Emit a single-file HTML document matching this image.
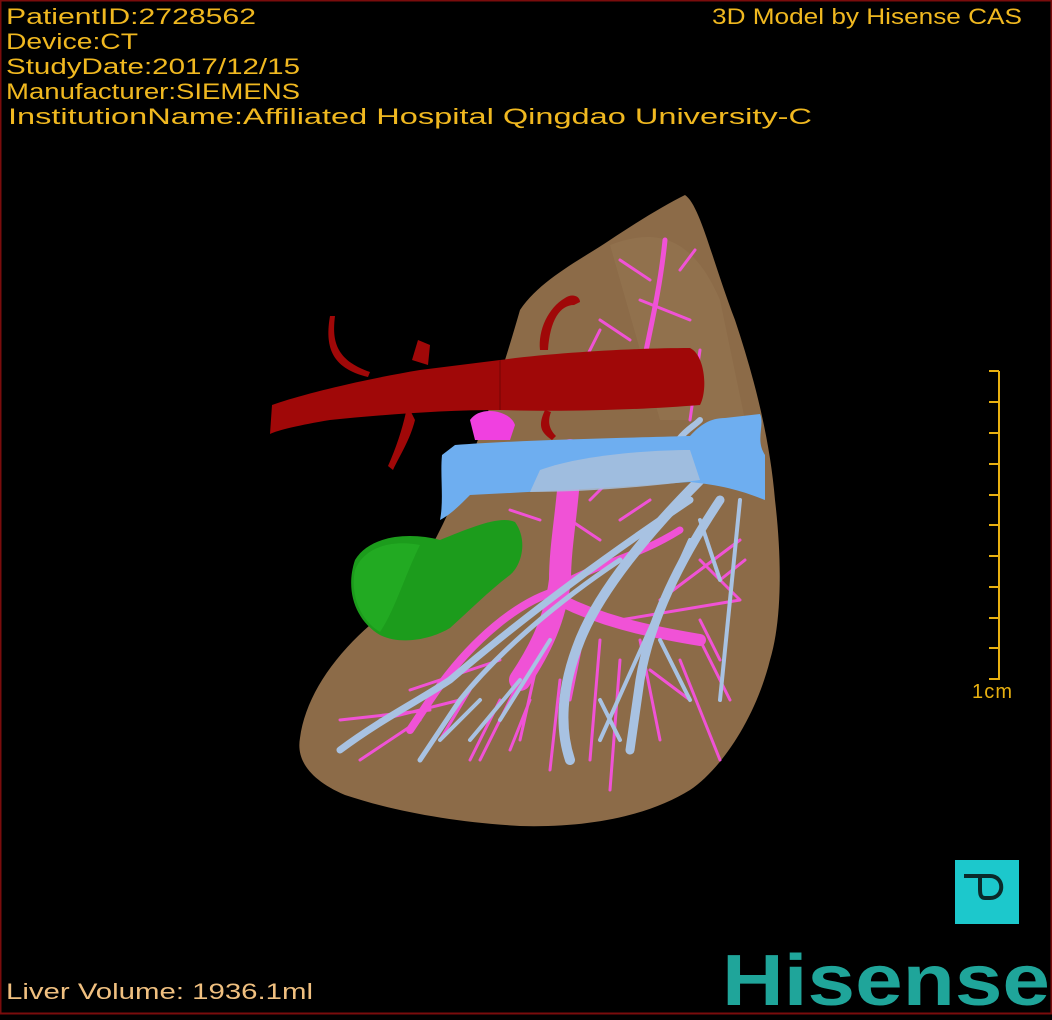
<!DOCTYPE html>
<html><head><meta charset="utf-8"><style>
html,body{margin:0;padding:0;background:#000;}
svg{display:block}
</style></head><body>
<svg width="1052" height="1020" viewBox="0 0 1052 1020" xmlns="http://www.w3.org/2000/svg">
<rect x="0" y="0" width="1052" height="1020" fill="#000"/>
<rect x="0.5" y="0.5" width="1051" height="1013" fill="none" stroke="#7a0c0c" stroke-width="2"/>

<!-- liver -->
<path d="M685,195 C700,205 712,260 735,320 C755,380 770,440 775,500 C782,560 782,620 770,660 C755,720 720,770 690,790 C650,815 590,828 520,826 C450,822 390,810 345,795 C310,780 296,760 300,738 C305,700 330,660 370,625 C400,600 420,570 440,530 C470,470 500,380 520,310 C540,280 580,260 610,240 C640,220 665,205 685,195 Z" fill="#8c6b48"/>
<path d="M610,245 C650,230 690,230 720,300 L745,420 L660,420 Z" fill="#957552" opacity="0.6"/>

<!-- magenta vessels -->
<g stroke="#f052d6" fill="none" stroke-linecap="round">
<path d="M570,450 C570,500 560,540 560,580 C555,620 540,650 520,680" stroke-width="22"/>
<path d="M560,600 C600,620 640,630 700,640" stroke-width="12"/>
<path d="M560,590 C520,600 470,640 430,700 L410,730" stroke-width="8"/>
<path d="M570,580 C610,560 640,555 680,530" stroke-width="7"/>
<path d="M665,240 C660,290 650,330 640,380" stroke-width="5"/>
<path d="M640,300 L690,320 M630,340 L600,320 M650,280 L620,260 M700,350 L690,420 M600,330 L585,360 M680,270 L695,250" stroke-width="3"/>
<path d="M520,680 L480,760 M540,650 L520,740 M600,640 L590,760 M640,640 L660,740 M700,640 L730,700 M460,700 L380,720 M430,710 L340,720 M620,620 L740,600 M660,600 L740,540 M500,700 L470,760 M560,680 L550,770 M620,660 L610,790 M680,660 L720,760 M500,660 L410,690 M420,720 L360,760 M470,690 L440,740 M530,700 L510,750 M580,650 L570,700 M650,670 L690,700 M700,620 L720,660 M720,580 L745,560 M700,560 L740,600 M600,540 L570,520 M620,520 L650,500 M590,500 L620,470 M540,520 L510,510" stroke-width="3"/>
<path d="M470,420 C480,405 510,410 515,425 L510,440 L475,440 Z" fill="#f040e0" stroke="none"/>
</g>

<!-- light blue vessels -->
<g stroke="#a8c2e2" fill="none" stroke-linecap="round">
<path d="M700,480 C650,530 600,590 580,640 C560,690 560,730 570,760" stroke-width="10"/>
<path d="M720,500 C680,560 650,620 640,680 L630,750" stroke-width="9"/>
<path d="M660,470 C680,430 690,430 700,420" stroke-width="6"/>
<path d="M690,500 C600,560 520,620 450,680 C420,700 380,720 340,750" stroke-width="7"/>
<path d="M620,560 C560,600 500,650 460,700 L420,760" stroke-width="5"/>
<path d="M700,520 L720,580 M740,500 L720,700 M690,540 L600,740 M520,680 L470,740 M550,640 L500,720 M480,700 L440,740 M600,700 L620,740 M660,640 L690,700" stroke-width="4"/>
</g>

<!-- red artery -->
<g fill="#a00808">
<path d="M272,405 C300,395 360,380 420,370 L500,360 C560,352 640,348 690,348 C705,355 708,390 700,405 C640,410 560,412 500,410 C440,410 380,415 330,420 C300,425 278,430 270,434 Z"/>
<path d="M412,360 L418,340 L430,345 L428,365 Z"/>
<path d="M410,410 L415,420 C410,440 400,455 393,470 L388,466 C396,448 402,430 406,412 Z"/>
<path d="M335,316 C332,340 335,360 370,372 L368,377 C330,368 325,345 330,316 Z"/>
<path d="M540,350 C538,330 548,308 565,298 C572,293 580,296 580,302 L574,305 C560,305 550,320 548,350 Z"/>
<path d="M545,410 C538,425 540,432 552,440 L556,436 C548,428 548,420 551,412 Z"/>
</g>
<path d="M500,360 L500,410" stroke="#8a0606" stroke-width="2"/>

<!-- blue vein band -->
<path d="M455,445 C520,440 620,438 690,436 C700,425 710,418 725,418 L760,414 C765,425 755,440 765,455 L765,500 C740,490 720,485 690,482 C610,488 530,492 470,495 C460,505 450,515 440,520 C444,500 440,475 442,455 Z" fill="#6eaef0"/>
<path d="M540,470 C580,455 650,450 690,450 L700,480 C640,488 580,492 530,492 Z" fill="#a8c0dc" opacity="0.85"/>

<!-- green -->
<path d="M355,560 C370,535 410,532 440,540 C470,528 500,515 515,522 C528,540 522,565 510,575 C490,590 470,610 450,628 C430,640 400,645 380,635 C355,620 345,590 355,560 Z" fill="#1c9c1c"/>
<path d="M355,570 C365,545 395,540 420,545 C405,575 395,610 380,632 C360,620 350,595 355,570 Z" fill="#22aa22"/>

<!-- scale bar -->
<g stroke="#e8b010" stroke-width="2">
<line x1="999" y1="371" x2="999" y2="680"/>
<line x1="989" y1="371" x2="999" y2="371"/>
<line x1="989" y1="402" x2="999" y2="402"/>
<line x1="989" y1="433" x2="999" y2="433"/>
<line x1="989" y1="464" x2="999" y2="464"/>
<line x1="989" y1="495" x2="999" y2="495"/>
<line x1="989" y1="525" x2="999" y2="525"/>
<line x1="989" y1="556" x2="999" y2="556"/>
<line x1="989" y1="587" x2="999" y2="587"/>
<line x1="989" y1="618" x2="999" y2="618"/>
<line x1="989" y1="648" x2="999" y2="648"/>
<line x1="989" y1="679" x2="999" y2="679"/>
</g>
<text x="972" y="698" font-family="Liberation Sans, sans-serif" font-size="20" fill="#e8b010" textLength="40">1cm</text>

<!-- texts -->
<g font-family="Liberation Sans, sans-serif" font-size="22" fill="#f0b820">
<text x="6" y="24" textLength="250" lengthAdjust="spacingAndGlyphs">PatientID:2728562</text>
<text x="6" y="49" textLength="132" lengthAdjust="spacingAndGlyphs">Device:CT</text>
<text x="6" y="74" textLength="294" lengthAdjust="spacingAndGlyphs">StudyDate:2017/12/15</text>
<text x="6" y="99" textLength="294" lengthAdjust="spacingAndGlyphs">Manufacturer:SIEMENS</text>
<text x="8" y="124" textLength="804" lengthAdjust="spacingAndGlyphs">InstitutionName:Affiliated Hospital Qingdao University-C</text>
<text x="712" y="24" textLength="310" lengthAdjust="spacingAndGlyphs">3D Model by Hisense CAS</text>
</g>
<text x="6" y="999" font-family="Liberation Sans, sans-serif" font-size="22" fill="#f0c080" textLength="307" lengthAdjust="spacingAndGlyphs">Liver Volume: 1936.1ml</text>

<!-- P logo -->
<rect x="955" y="860" width="64" height="64" fill="#1cc8cc"/>
<path d="M964,876 L990,876 C1005,876 1005,898 990,898 L985,898 C980,898 980,893 980,888 L980,876" fill="none" stroke="#0a2a2a" stroke-width="4"/>

<!-- Hisense -->
<text x="722" y="1005" font-family="Liberation Sans, sans-serif" font-weight="bold" font-size="72" fill="#1fa59a" textLength="328" lengthAdjust="spacingAndGlyphs">Hisense</text>
</svg>
</body></html>
